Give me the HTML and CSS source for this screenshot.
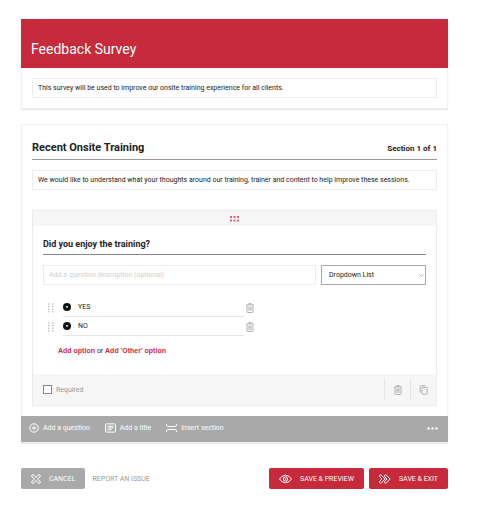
FILE: index.html
```html
<!DOCTYPE html>
<html lang="en">
<head>
  <meta charset="UTF-8">
  <title>Feedback Survey</title>
  <link rel="stylesheet" href="styles.css">
</head>

<body>

  <!-- shared icons -->
  <svg class="iconDefs" width="0" height="0" aria-hidden="true">
    <symbol id="trash" viewBox="0 0 8 10">
      <path d="M.5 1.800h7M2.800 1.500V.6h2.400v.9M1 2v6.600q0 .9.9.9h4.200q.9 0 .9-.9V2"/>
      <path stroke-width=".6" d="M2 4h4M2 5.600h4M2 7.200h4M3.200 3.600v4M4.800 3.600v4"/>
    </symbol>
    <symbol id="grip" viewBox="0 0 6 10">
      <path d="M0 1h1.400M4 1h1.400M0 3.600h1.400M4 3.600h1.400M0 6.200h1.400M4 6.200h1.400M0 8.800h1.400M4 8.800h1.400"/>
    </symbol>
    <symbol id="dot" viewBox="0 0 8 8">
      <circle cx="4" cy="4" r="4"/>
      <path fill="#fff" d="M2.600 3.200h2.800L4 5.200z"/>
    </symbol>
  </svg>

  <div class="page">

    <header class="card surveyCard">
      <h1 class="surveyTitle">Feedback Survey</h1>
      <div class="cardBody">
        <input type="text" class="textBox" aria-label="Survey description" value="This survey will be used to improve our onsite training experience for all clients.">
      </div>
    </header>

    <main class="card sectionCard">
      <div class="sectionBody">
        <div class="sectionHead">
          <h2 class="sectionTitle">Recent Onsite Training</h2>
          <span class="sectionCount">Section 1 of 1</span>
        </div>
        <input type="text" class="textBox" aria-label="Section description" value="We would like to understand what your thoughts around our training, trainer and content to help improve these sessions.">

        <section class="question">
          <div class="dragBar">
            <svg class="dragIcon" viewBox="0 0 9 6" width="9" height="6" aria-hidden="true"><path d="M0 1h2M3.500 1h2M7 1h2M0 4.500h2M3.500 4.500h2M7 4.500h2"/></svg>
          </div>
          <div class="questionBody">
            <h3 class="questionTitle">Did you enjoy the training?</h3>
            <div class="questionFields">
              <input type="text" class="textBox" aria-label="Question description" placeholder="Add a question description (optional)">
              <div class="selectWrapper">
                <select class="typeSelect" aria-label="Question type">
                  <option>Dropdown List</option>
                </select>
                <svg class="selectArrow" viewBox="0 0 5 3" width="5" height="3" aria-hidden="true"><path d="M.5.5l2 1.800 2-1.800"/></svg>
              </div>
            </div>
            <ul class="options">
              <li class="option">
                <svg class="gripIcon" width="6" height="10" aria-hidden="true"><use href="#grip"/></svg>
                <div class="optionLine">
                  <svg width="8" height="8" aria-hidden="true"><use href="#dot"/></svg>
                  <input type="text" class="optionInput" aria-label="Option 1" value="YES">
                </div>
                <button class="iconBtn" aria-label="Delete option 1"><svg class="trashIcon" width="8" height="10"><use href="#trash"/></svg></button>
              </li>
              <li class="option">
                <svg class="gripIcon" width="6" height="10" aria-hidden="true"><use href="#grip"/></svg>
                <div class="optionLine">
                  <svg width="8" height="8" aria-hidden="true"><use href="#dot"/></svg>
                  <input type="text" class="optionInput" aria-label="Option 2" value="NO">
                </div>
                <button class="iconBtn" aria-label="Delete option 2"><svg class="trashIcon" width="8" height="10"><use href="#trash"/></svg></button>
              </li>
            </ul>
            <p class="addLinks"><a href="#">Add option</a> or <a href="#">Add 'Other' option</a></p>
          </div>
          <div class="questionFooter">
            <label class="required"><input type="checkbox" class="checkBox">Required</label>
            <div class="footerBtns">
              <button class="iconBtn footerBtn" aria-label="Delete question"><svg class="trashIcon" width="8" height="10"><use href="#trash"/></svg></button>
              <button class="iconBtn footerBtn" aria-label="Copy question"><svg class="copyIcon" viewBox="0 0 9 10" width="9" height="10"><path d="M1.200 7.500V1.700q0-1 1-1h4.200"/><rect x="3" y="2.400" width="5.200" height="6.800" rx=".8"/></svg></button>
            </div>
          </div>
        </section>
      </div>

      <div class="toolbar">
        <button class="toolBtn">
          <svg viewBox="0 0 10 10" width="10" height="10" aria-hidden="true"><circle cx="5" cy="5" r="4.200"/><path d="M5 2.800v4.400M2.800 5h4.400"/></svg>
          Add a question
        </button>
        <button class="toolBtn">
          <svg viewBox="0 0 11 10" width="11" height="10" aria-hidden="true"><rect x=".5" y=".9" width="10" height="8.200" rx=".6"/><path d="M2.500 3.300h6M2.500 5h6M2.500 6.700h4"/></svg>
          Add a title
        </button>
        <button class="toolBtn">
          <svg viewBox="0 0 11 10" width="11" height="10" aria-hidden="true"><path d="M.6 1v1.500q0 1 1 1h7.800q1 0 1-1V1M.6 9V7.500q0-1 1-1h7.800q1 0 1 1V9"/></svg>
          Insert section
        </button>
        <button class="toolBtn moreBtn" aria-label="More"><svg class="moreIcon" viewBox="0 0 11 3" width="11" height="3"><circle cx="1.500" cy="1.500" r="1.200"/><circle cx="5.500" cy="1.500" r="1.200"/><circle cx="9.500" cy="1.500" r="1.200"/></svg></button>
      </div>
    </main>

    <footer class="actions">
      <button class="btn cancelBtn">
        <svg viewBox="0 0 10 10" width="10" height="10" aria-hidden="true"><path d="M3.600 5L1 7.200q-.8 1 0 1.800t1.800 0L5 6.500 7.200 9q1 .8 1.800 0t0-1.800L6.500 5 9 2.800q.8-1 0-1.800t-1.800 0L5 3.500 2.800 1Q1.800.2 1 1t0 1.800z"/></svg>
        CANCEL
      </button>
      <a class="reportLink" href="#">REPORT AN ISSUE</a>
      <button class="btn saveBtn previewBtn">
        <svg viewBox="0 0 13 10" width="13" height="10" aria-hidden="true"><path d="M.5 5Q2.800 1.200 6.500 1.200T12.500 5Q10.200 8.800 6.500 8.800T.5 5z"/><circle cx="6.500" cy="5" r="2.200"/><circle cx="6.500" cy="5" r=".5"/></svg>
        SAVE &amp; PREVIEW
      </button>
      <button class="btn saveBtn">
        <svg viewBox="0 0 12 10" width="12" height="10" aria-hidden="true"><path d="M.8 1.200q.8-.8 1.600 0L6.200 5 2.400 8.800q-.8.8-1.600 0t0-1.600L3 5 .8 2.800q-.8-.8 0-1.600zM5.800 1.200q.8-.8 1.600 0L11.200 5 7.400 8.800q-.8.8-1.600 0t0-1.600L8 5 5.800 2.800q-.8-.8 0-1.600z"/></svg>
        SAVE &amp; EXIT
      </button>
    </footer>

  </div>

</body>
</html>
```
FILE: styles.css
```css
* {
  box-sizing: border-box;
}
body {
  margin: 0;
  background-color: #fff;
  color: #222;
  font-family: Roboto, "Liberation Sans", sans-serif;
  font-size: 7px;
  line-height: 10px;
}
h1, h2, h3, p, ul {
  margin: 0;
  padding: 0;
}
button, input, select {
  font: inherit;
  color: inherit;
}
button {
  padding: 0;
  border: 0;
  background: none;
  cursor: pointer;
}
svg {
  flex: none;
  fill: none;
}
a {
  text-decoration: none;
}
.iconDefs {
  position: absolute;
}
.page {
  padding: 19px 31px 20px 21px;
}

/* cards */
.card {
  border: 1px solid #f0f0f0;
  box-shadow: 0 1px 1px #e8e8e8;
}
.surveyCard {
  border-top: 0;
}
.surveyTitle {
  margin: 0 -1px;
  padding: 20px 10px 9px;
  background-color: #c72a3a;
  color: #fff;
  font-size: 14px;
  font-weight: normal;
  line-height: 20px;
}
.cardBody {
  padding: 10px;
}
.textBox {
  display: block;
  width: 100%;
  height: 20px;
  padding: 0 5px;
  border: 1px solid #ececec;
  background-color: #fff;
  line-height: 18px;
}
.textBox::placeholder {
  color: #d0d0d0;
}

/* section */
.sectionCard {
  margin-top: 15px;
}
.sectionBody {
  padding: 15px 10px 10px;
}
.sectionHead {
  display: flex;
  justify-content: space-between;
  align-items: baseline;
  height: 20px;
  margin-bottom: 10px;
  border-bottom: 1px solid #999;
}
.sectionTitle {
  font-size: 11px;
  line-height: 16px;
}
.sectionCount {
  font-size: 8px;
  font-weight: bold;
}

/* question */
.question {
  margin-top: 20px;
  border: 1px solid #ececec;
}
.dragBar {
  display: flex;
  justify-content: center;
  align-items: center;
  height: 15px;
  background-color: #f6f6f6;
}
.dragIcon {
  stroke: #dd5f78;
  stroke-width: 2;
}
.questionBody {
  padding: 12px 10px 18px;
}
.questionTitle {
  height: 17px;
  border-bottom: 1px solid #888;
  font-size: 9px;
  line-height: 12px;
}
.questionFields {
  display: flex;
  gap: 5px;
  margin-top: 10px;
}
.selectWrapper {
  position: relative;
  flex: 0 0 105px;
}
.typeSelect {
  display: block;
  width: 100%;
  height: 20px;
  padding: 0 7px;
  border: 1px solid #aaa;
  border-radius: 0;
  background-color: #fff;
  appearance: none;
}
.selectArrow {
  position: absolute;
  right: 2px;
  top: 9px;
  stroke: #aaa;
  pointer-events: none;
}
.options {
  margin-top: 13px;
  list-style: none;
}
.option {
  display: flex;
  align-items: center;
  width: 55%;
  height: 19px;
  padding-left: 5px;
}
.gripIcon {
  stroke: #aaa;
  stroke-width: 1;
}
.optionLine {
  display: flex;
  flex: 1;
  align-items: center;
  height: 19px;
  margin: 0 2px 0 9px;
  border-bottom: 1px solid #e6e6e6;
}
.optionLine svg {
  fill: #111;
}
.optionInput {
  flex: 1;
  min-width: 0;
  padding: 0 7px;
  border: 0;
  background: none;
  line-height: 14px;
}
.iconBtn {
  display: flex;
  justify-content: center;
  align-items: center;
}
.trashIcon, .copyIcon {
  stroke: #b0b0b0;
  stroke-width: 1;
}
.addLinks {
  margin-top: 10px;
  padding-left: 15px;
  font-family: "Liberation Sans", Arial, sans-serif;
}
.addLinks a {
  color: #d0284a;
  font-weight: bold;
}
.questionFooter {
  display: flex;
  justify-content: space-between;
  align-items: center;
  height: 31px;
  padding-left: 10px;
  background-color: #f6f6f6;
}
.required {
  display: flex;
  align-items: center;
  gap: 4px;
  color: #999;
}
.checkBox {
  width: 9px;
  height: 9px;
  margin: 0;
  border: 1px solid #888;
  background-color: #fff;
  appearance: none;
}
.checkBox:checked {
  background-color: #888;
}
.footerBtns {
  display: flex;
}
.footerBtn {
  width: 26px;
  height: 21px;
  border-left: 1px solid #e6e6e6;
}

/* toolbar */
.toolbar {
  display: flex;
  align-items: center;
  gap: 15px;
  height: 26px;
  margin: 0 -1px;
  padding: 0 10px 2px 8px;
  background-color: #a9a9a9;
}
.toolBtn {
  display: flex;
  align-items: center;
  gap: 4px;
  color: #fff;
}
.toolBtn svg {
  stroke: #fff;
  stroke-width: 1;
}
.moreBtn {
  margin-left: auto;
}
.toolBtn .moreIcon {
  fill: #fff;
  stroke: none;
}

/* bottom buttons */
.actions {
  display: flex;
  align-items: center;
  gap: 5px;
  margin-top: 25px;
}
.btn {
  display: flex;
  align-items: center;
  gap: 8px;
  height: 21px;
  padding: 0 10px;
  border-radius: 2px;
  color: #fff;
}
.btn svg {
  stroke: #fff;
  stroke-width: 1;
}
.cancelBtn {
  background-color: #a9a9a9;
}
.saveBtn {
  background-color: #c72a3a;
}
.reportLink {
  margin-left: 2px;
  color: #999;
}
.previewBtn {
  margin-left: auto;
}
```
